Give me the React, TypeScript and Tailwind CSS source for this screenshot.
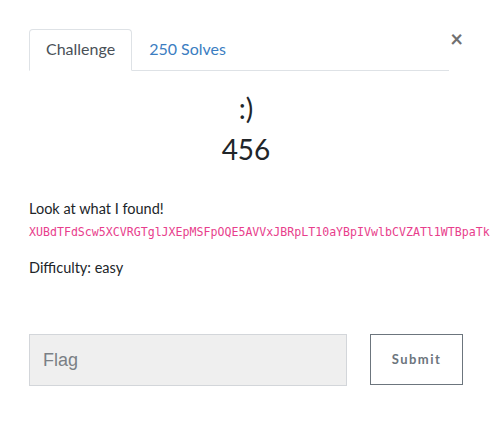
export default function App() {
  const flag =
    "XUBdTFdScw5XCVRGTglJXEpMSFpOQE5AVVxJBRpLT10aYBpIVwlbCVZATl1WTBpaTk";

  return (
    <main className="min-h-screen w-[492px] overflow-hidden bg-white font-['Lato','Noto_Sans',sans-serif] text-[#212529]">
      <div className="px-[29px] pt-[29px]">
        {/* Tabs */}
        <div className="flex items-start">
          <nav className="flex flex-1 border-b border-[#dee2e6]">
            <div className="-mb-px rounded-t-[4px] border border-[#dee2e6] border-b-white bg-white px-[16px] pb-[10px] pt-[8px] text-[16px] leading-[22px] text-[#495057]">
              Challenge
            </div>
            <div className="px-[17px] pb-[10px] pt-[9px] text-[16px] leading-[22px] text-[#3b7dc1]">
              250 Solves
            </div>
          </nav>
          <button className="mt-[-1px] w-[14px] text-right text-[22px] font-bold leading-[22px] text-[#707070]">
            ×
          </button>
        </div>

        {/* Title */}
        <div className="mt-[20px] text-center text-[28px] font-normal leading-[34px]">
          :)
        </div>
        <div className="mt-[7px] text-center text-[28px] font-normal leading-[34px]">
          456
        </div>

        {/* Description */}
        <div className="mt-[33px] text-[14.5px] leading-[20px]">
          Look at what I found!
        </div>
        <div className="mt-[4px] whitespace-nowrap font-['DejaVu_Sans_Mono',monospace] text-[11.6px] leading-[18px] text-[#e83e8c]">
          {flag}
        </div>
        <div className="mt-[17px] text-[14.5px] leading-[20px]">
          Difficulty: easy
        </div>

        {/* Submit */}
        <div className="mt-[56px] flex items-start gap-[23px]">
          <input
            placeholder="Flag"
            className="h-[52px] w-[318px] border border-[#d3d6da] bg-[#efefef] px-[13px] font-['Liberation_Sans',sans-serif] text-[18px] text-[#495057] placeholder:text-[#7a7f85] outline-none"
          />
          <button className="h-[51px] w-[93px] border border-[#6c757d] bg-white text-[13px] font-bold tracking-[1.5px] text-[#6c757d]">
            Submit
          </button>
        </div>
      </div>
    </main>
  );
}
